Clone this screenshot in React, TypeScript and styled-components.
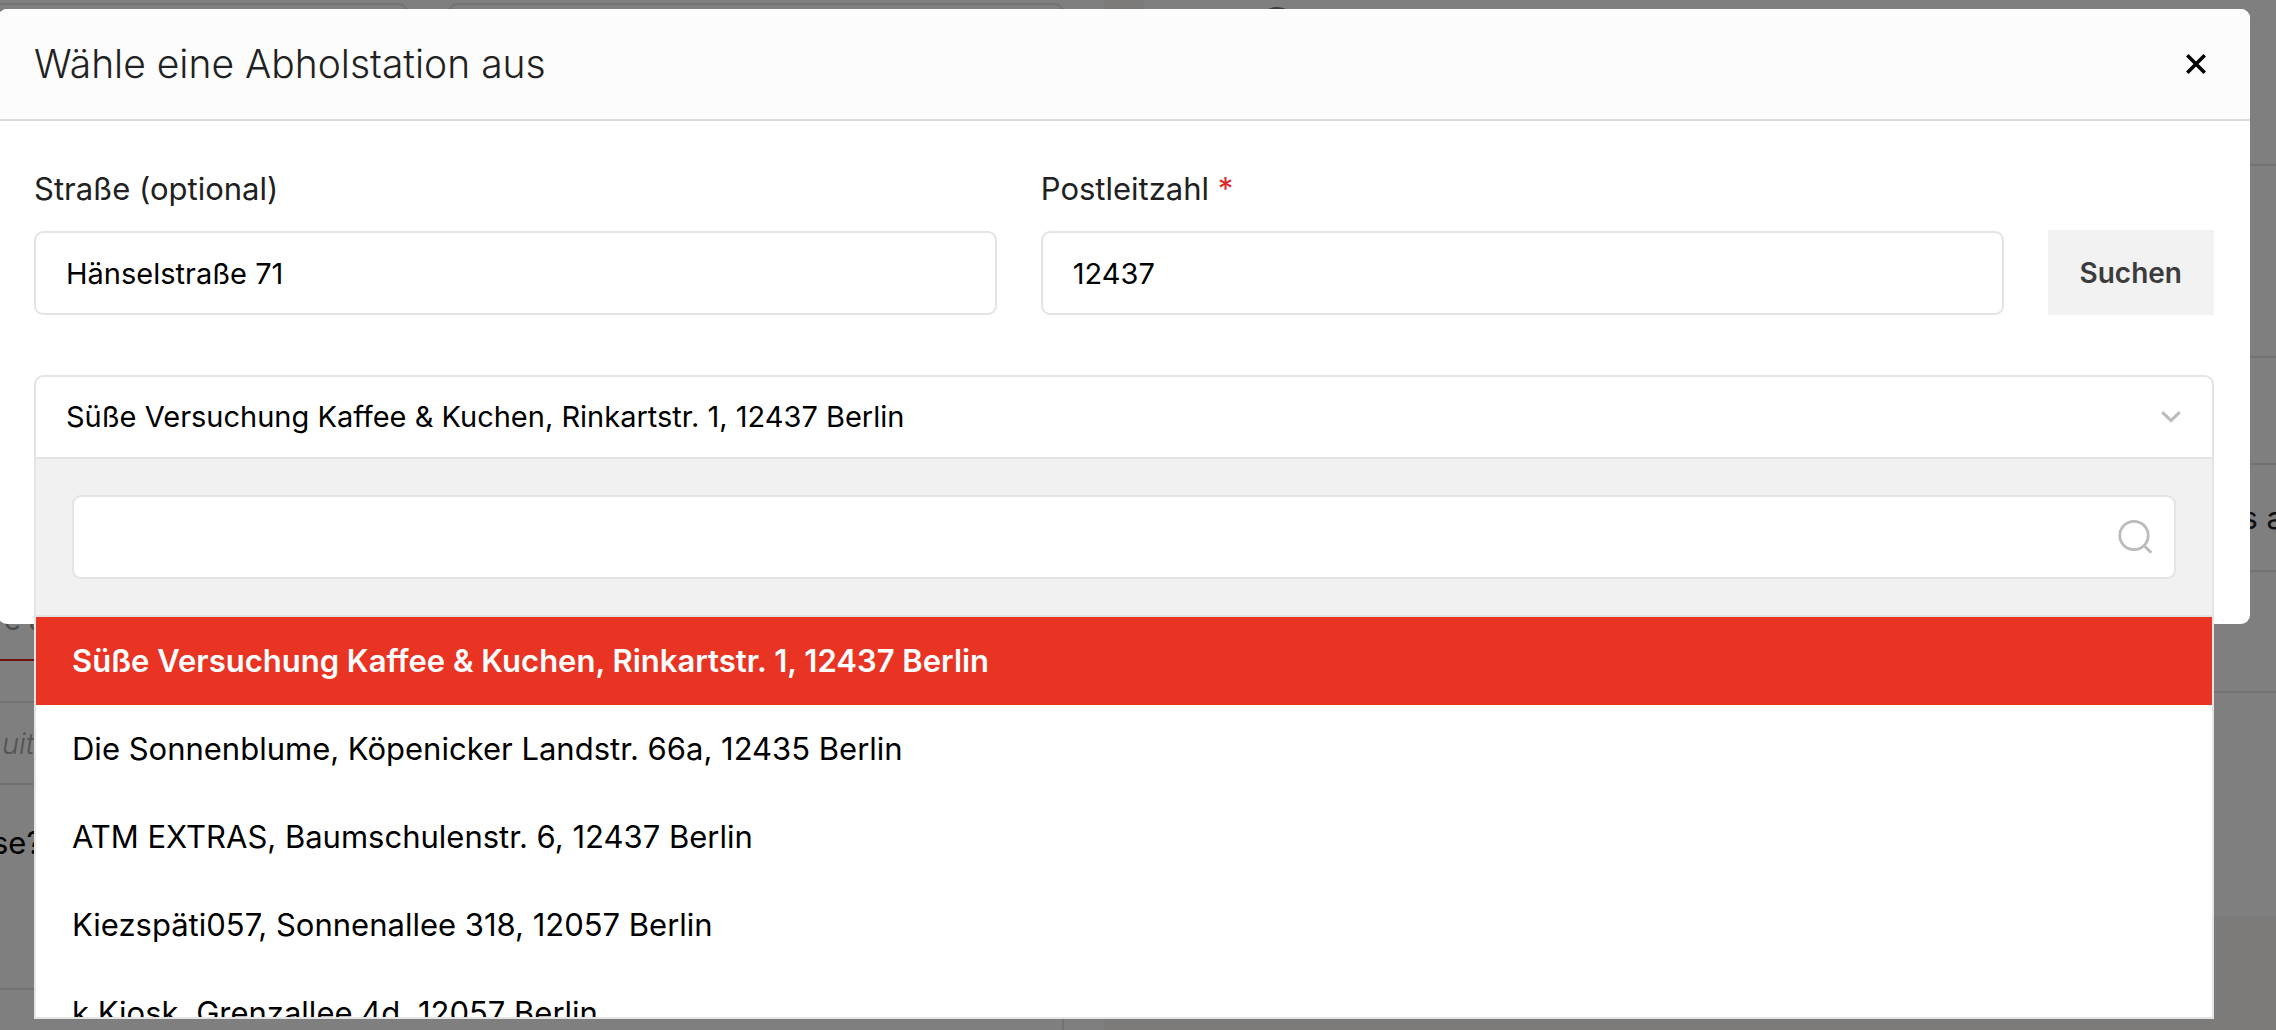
import React, { useState } from "react";
import styled, { createGlobalStyle, css } from "styled-components";

const line = "#e4e4e4";
const red = "#e93323";

const GlobalStyle = createGlobalStyle`
  *, *::before, *::after { box-sizing: border-box; }
  body {
    margin: 0;
    height: 100vh;
    overflow: hidden;
    background: #fff;
    color: #212121;
    font-family: Inter, "Open Sans", sans-serif;
    font-size: 29px;
    line-height: 36px;
    font-weight: 400;
  }
  input, select, button { font: inherit; color: inherit; margin: 0; }
  h2, p, ul { margin: 0; padding: 0; }
`;

const Checkout = styled.div`
  display: grid;
  grid-template-columns: 1104fr 1172fr;
  height: 100vh;
  overflow: hidden;
`;

const Form = styled.section`
  display: flex;
  flex-direction: column;
  padding: 3px 40px 0 0;
`;

const FormPair = styled.div`
  display: grid;
  grid-template-columns: 408fr 608fr;
  gap: 48px;
  margin-bottom: 490px;
`;

const PageBox = styled.div<{ $invalid?: boolean; $hint?: boolean }>`
  height: 84px;
  margin-left: -8px;
  padding: 23px 10px;
  border: 2px solid ${line};
  border-radius: 9px;
  white-space: nowrap;
  overflow: hidden;
  ${(p) =>
    p.$invalid &&
    css`
      border-bottom-color: #e02020;
      margin-bottom: 40px;
      color: #999;
    `}
  ${(p) =>
    p.$hint &&
    css`
      color: #a8a8a8;
      font-style: italic;
      font-weight: 300;
      padding: 23px 8px;
    `}
`;

const PageQuestion = styled.p`
  padding: 38px 0 125px;
  margin-left: -8px;
  font-size: 31px;
  line-height: 40px;
  color: #000;
`;

const PagePanel = styled.div`
  flex: 1;
  border: 2px solid ${line};
  border-width: 2px 2px 0 0;
`;

const Summary = styled.aside`
  padding-left: 40px;
  background: #fbf7f2;
`;

const SummaryCard = styled.div`
  height: 916px;
  background: #fff;
`;

const SummaryRow = styled.div<{ $height: number }>`
  display: flex;
  align-items: center;
  justify-content: flex-end;
  height: ${(p) => p.$height}px;
  margin-right: -8px;
  border-bottom: 2px solid ${line};
  font-size: 31px;
  overflow: hidden;
`;

const SummaryHead = styled(SummaryRow)`
  align-items: flex-start;
  justify-content: flex-start;
  padding: 7px 0 0 113px;
`;

const Badge = styled.span`
  width: 40px;
  height: 40px;
  border-radius: 50%;
  background: #777;
`;

const Overlay = styled.div`
  position: fixed;
  inset: 0;
  padding: 9px 26px 0 0;
  background: rgba(0, 0, 0, 0.5);
`;

const Dialog = styled.div`
  margin-left: -2px;
  background: #fff;
  border-radius: 9px;
`;

const DialogHeader = styled.header`
  display: flex;
  align-items: center;
  justify-content: space-between;
  height: 112px;
  padding: 0 36px;
  background: #fcfcfc;
  border-bottom: 2px solid #dcdcdc;
  border-radius: 9px 9px 0 0;
`;

const Title = styled.h2`
  font-size: 39px;
  line-height: 48px;
  font-weight: 300;
`;

const CloseButton = styled.button`
  display: flex;
  padding: 8px;
  border: 0;
  background: none;
  color: #000;
`;

const DialogBody = styled.div`
  padding: 48px 36px 165px;
`;

const AddressForm = styled.form`
  display: grid;
  grid-template-columns: 1fr 1fr auto;
  align-items: end;
  gap: 44px;
  margin-bottom: 60px;
`;

const Field = styled.div`
  display: flex;
  flex-direction: column;
  gap: 22px;
`;

const Label = styled.label`
  font-size: 31px;
  line-height: 40px;
`;

const Required = styled.span`
  color: #d92b2b;
`;

const inputBox = css`
  width: 100%;
  height: 84px;
  padding: 0 30px;
  border: 2px solid ${line};
  border-radius: 9px;
  outline: 0;
  background: #fff;
  color: #000;
`;

const TextInput = styled.input`
  ${inputBox}
`;

const SearchButton = styled.button`
  height: 85px;
  padding: 0 32px;
  border: 0;
  background: #f2f2f2;
  color: #3c3c3c;
  font-size: 28px;
  font-weight: 600;
`;

const StationPicker = styled.div`
  position: relative;
`;

const StationSelect = styled.select`
  ${inputBox}
  appearance: none;
  display: block;
  border-radius: 9px 9px 0 0;
`;

const ChevronSlot = styled.span`
  position: absolute;
  top: 36px;
  right: 33px;
  display: flex;
  color: #bbb;
  pointer-events: none;
`;

const StationPanel = styled.div`
  position: absolute;
  top: 100%;
  left: 0;
  right: 0;
  border: 2px solid ${line};
  border-top: 0;
  background: #fff;
`;

const StationFilter = styled.div`
  position: relative;
  padding: 36px;
  background: #f1f1f1;
  border-bottom: 2px solid ${line};
`;

const FilterIcon = styled.span`
  position: absolute;
  top: 59px;
  right: 59px;
  display: flex;
  color: #bbb;
`;

const StationList = styled.ul`
  height: 400px;
  overflow: hidden;
  list-style: none;
`;

const StationOption = styled.li<{ $active: boolean }>`
  padding: 24px 36px;
  font-size: 31px;
  line-height: 40px;
  color: ${(p) => (p.$active ? "#fff" : "#000")};
  background: ${(p) => (p.$active ? red : "#fff")};
  font-weight: ${(p) => (p.$active ? 600 : "inherit")};
  cursor: pointer;
`;

const stations = [
  "Süße Versuchung Kaffee & Kuchen, Rinkartstr. 1, 12437 Berlin",
  "Die Sonnenblume, Köpenicker Landstr. 66a, 12435 Berlin",
  "ATM EXTRAS, Baumschulenstr. 6, 12437 Berlin",
  "Kiezspäti057, Sonnenallee 318, 12057 Berlin",
  "k Kiosk, Grenzallee 4d, 12057 Berlin",
];

const CloseIcon = () => (
  <svg width="20" height="20" viewBox="0 0 20 20" fill="none" stroke="currentColor" strokeWidth="3.6" aria-hidden="true">
    <path d="M1.3 1.3 18.7 18.7M18.7 1.3 1.3 18.7" />
  </svg>
);

const ChevronIcon = () => (
  <svg width="20" height="12" viewBox="0 0 20 12" fill="none" stroke="currentColor" strokeWidth="3" aria-hidden="true">
    <path d="M1.2 1.2 10 9.6 18.8 1.2" />
  </svg>
);

const SearchIcon = () => (
  <svg width="36" height="36" viewBox="0 0 36 36" fill="none" stroke="currentColor" strokeWidth="2.8" aria-hidden="true">
    <circle cx="17" cy="17.5" r="14.2" />
    <path d="M27 27.5 34.3 34.8" />
  </svg>
);

export default function App() {
  const [station, setStation] = useState(stations[0]);
  return (
    <>
      <GlobalStyle />
      <Checkout aria-hidden="true">
        <Form>
          <FormPair>
            <PageBox />
            <PageBox />
          </FormPair>
          <PageBox $invalid>e a</PageBox>
          <PageBox $hint>uit</PageBox>
          <PageQuestion>se?</PageQuestion>
          <PagePanel />
        </Form>
        <Summary>
          <SummaryCard>
            <SummaryHead $height={166}>
              <Badge />
            </SummaryHead>
            <SummaryRow $height={192} />
            <SummaryRow $height={107} />
            <SummaryRow $height={107}>s a</SummaryRow>
            <SummaryRow $height={121} />
          </SummaryCard>
        </Summary>
      </Checkout>
      <Overlay>
        <Dialog role="dialog" aria-labelledby="dialog-title">
          <DialogHeader>
            <Title id="dialog-title">Wähle eine Abholstation aus</Title>
            <CloseButton type="button" aria-label="Schließen">
              <CloseIcon />
            </CloseButton>
          </DialogHeader>
          <DialogBody>
            <AddressForm onSubmit={(e) => e.preventDefault()}>
              <Field>
                <Label htmlFor="street">Straße (optional)</Label>
                <TextInput id="street" defaultValue="Hänselstraße 71" />
              </Field>
              <Field>
                <Label htmlFor="zip">
                  Postleitzahl <Required>*</Required>
                </Label>
                <TextInput id="zip" defaultValue="12437" required />
              </Field>
              <SearchButton type="submit">Suchen</SearchButton>
            </AddressForm>
            <StationPicker>
              <StationSelect aria-label="Abholstation" value={station} onChange={(e) => setStation(e.target.value)}>
                {stations.map((name) => (
                  <option key={name}>{name}</option>
                ))}
              </StationSelect>
              <ChevronSlot>
                <ChevronIcon />
              </ChevronSlot>
              <StationPanel>
                <StationFilter>
                  <TextInput type="text" aria-label="Abholstation suchen" />
                  <FilterIcon>
                    <SearchIcon />
                  </FilterIcon>
                </StationFilter>
                <StationList role="listbox" aria-label="Abholstationen">
                  {stations.map((name) => (
                    <StationOption
                      key={name}
                      role="option"
                      aria-selected={name === station}
                      $active={name === station}
                      onClick={() => setStation(name)}
                    >
                      {name}
                    </StationOption>
                  ))}
                </StationList>
              </StationPanel>
            </StationPicker>
          </DialogBody>
        </Dialog>
      </Overlay>
    </>
  );
}
